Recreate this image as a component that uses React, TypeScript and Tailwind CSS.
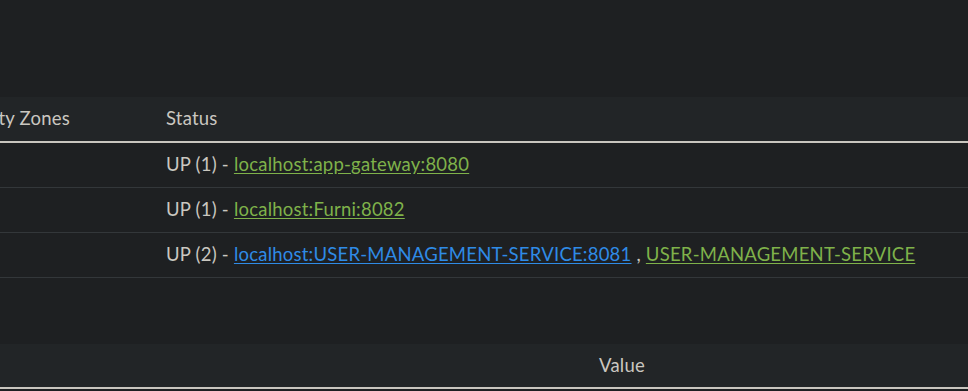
const rows = [
  {
    count: 1,
    links: [{ text: 'localhost:app-gateway:8080', color: 'green' }],
  },
  {
    count: 1,
    links: [{ text: 'localhost:Furni:8082', color: 'green' }],
  },
  {
    count: 2,
    links: [
      { text: 'localhost:USER-MANAGEMENT-SERVICE:8081', color: 'blue' },
      { text: 'USER-MANAGEMENT-SERVICE', color: 'green' },
    ],
  },
]

export default function App() {
  return (
    <div className="w-[968px] h-[391px] overflow-hidden bg-[#1e2022] text-[#cac7c0] text-[18.5px] tracking-[0.22px] font-['Lato',sans-serif]">
      <div className="h-[97px]" />

      {/* Instances table, scrolled sideways so only the tail of the zones column shows */}
      <div className="flex h-[46px] items-center bg-[#222527] border-b-2 border-[#c9c6bf]">
        <div className="w-[166px] pr-[96px] whitespace-nowrap overflow-hidden flex justify-end">
          <span className="shrink-0">Availability Zones</span>
        </div>
        <div className="flex-1">Status</div>
      </div>
      {rows.map((row, i) => (
        <div
          key={i}
          className="flex h-[45px] items-center border-b border-[#33373a]"
        >
          <div className="w-[166px]" />
          <div className="flex-1 whitespace-nowrap">
            UP ({row.count}) -{' '}
            {row.links.map((link, j) => (
              <span key={j}>
                {j > 0 && ' , '}
                <a
                  href="#"
                  className={
                    link.color === 'blue'
                      ? 'underline underline-offset-2 text-[#2f8be6]'
                      : 'underline underline-offset-2 text-[#7fb24a]'
                  }
                >
                  {link.text}
                </a>
              </span>
            ))}
          </div>
        </div>
      ))}

      <div className="h-[66px]" />

      {/* General info table */}
      <div className="flex h-[45px] items-center bg-[#222527] border-b-2 border-[#c9c6bf]">
        <div className="w-[599px]" />
        <div>Value</div>
      </div>
    </div>
  )
}
